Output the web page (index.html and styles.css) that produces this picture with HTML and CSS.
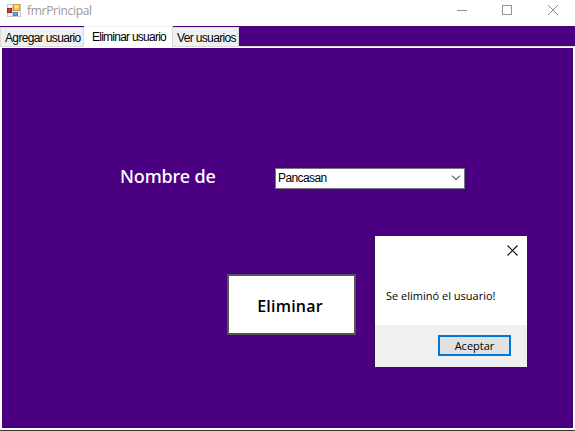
FILE: index.html
```html
<!DOCTYPE html>
<html lang="es">
<head>
<meta charset="utf-8">
<title>fmrPrincipal</title>
<link rel="stylesheet" href="styles.css">
</head>
<body>
<div class="window">
  <header class="titlebar">
    <svg class="app-icon" width="15" height="15" viewBox="0 0 15 15">
      <rect x=".5" y="1.500" width="13" height="12" fill="#f4f4f4" stroke="#c8c8c8"/>
      <path d="M5.500 1v12" stroke="#ccc"/>
      <rect x=".5" y="5.500" width="4" height="4" fill="#d8352b" stroke="#a91f17"/>
      <rect x="6.500" y="1.500" width="6" height="6" fill="#ffc83a" stroke="#d09a2c"/>
      <path d="M7 2h5v3H7z" fill="#ffe07a"/>
      <rect x="6.500" y="9.500" width="4" height="3" fill="#68a0ee" stroke="#4a80d4"/>
    </svg>
    <span class="title">fmrPrincipal</span>
    <svg class="controls" width="104" height="12" viewBox="0 0 104 12" fill="none" stroke="#929292">
      <path d="M0 7.500h10"/>
      <rect x="45.500" y="2.500" width="9" height="9"/>
      <path d="M91 2l10 10M101 2L91 10" stroke="none"/>
      <path d="M91 2l10 10M101 2L91 12"/>
    </svg>
  </header>
  <nav class="tabs">
    <span class="tab tab-add">Agregar usuario</span>
    <span class="tab tab-active">Eliminar usuario</span>
    <span class="tab tab-view">Ver usuarios</span>
  </nav>
  <main class="page">
    <div class="field">
      <label class="label">Nombre de</label>
      <div class="combo">
        <span>Pancasan</span>
        <svg width="10" height="6" viewBox="0 0 10 6" fill="none" stroke="#606060" stroke-width="1.200"><path d="M1 .7l4 4 4-4"/></svg>
      </div>
    </div>
    <button class="delete">Eliminar</button>
  </main>
  <section class="dialog">
    <div class="dialog-body">
      <svg class="dialog-close" width="11" height="11" viewBox="0 0 11 11" stroke="#111" stroke-width="1.100"><path d="M.5 .5l10 10M10.500 .5l-10 10"/></svg>
      <span class="message">Se eliminó el usuario!</span>
    </div>
    <div class="dialog-footer"><button class="accept">Aceptar</button></div>
  </section>
</div>
</body>
</html>
```
FILE: styles.css
```css
* { box-sizing: border-box; }
body { margin: 0; overflow: hidden; }
.window {
  position: relative;
  display: flex;
  flex-direction: column;
  width: 575px;
  height: 431px;
  background: #4b0082;
  border-bottom: 1px solid #39322f;
  font: 12px/14px "Liberation Sans", sans-serif;
  color: #000;
}
.titlebar {
  display: flex;
  align-items: flex-start;
  height: 26px;
  padding: 3px 14px 0 7px;
  background: #fff;
}
.title {
  margin: 1px 0 0 5px;
  font: 12px/14px "Open Sans", sans-serif;
  letter-spacing: -.3px;
  color: #999;
}
.controls { margin: 0 0 0 auto; }
.tabs {
  display: flex;
  align-items: flex-end;
  height: 21px;
  border-bottom: 1px solid #dcdcdc;
}
.tab {
  height: 19px;
  padding: 3px 0 0 4px;
  border: 1px solid #d9d9d9;
  border-bottom: 0;
  background: #f0f0f0;
  letter-spacing: -.65px;
  white-space: nowrap;
}
.tab-add { width: 84px; }
.tab-active {
  width: 89px;
  height: 21px;
  margin-bottom: -1px;
  padding: 3px 0 0 8px;
  border-top-color: #eee;
  border-left: 0;
  background: #fff;
  letter-spacing: -.75px;
}
.tab-view { width: 66px; border-left: 0; }
.page {
  flex: 1;
  border: solid #fff;
  border-width: 1px 2px 2px;
}
.field {
  display: flex;
  align-items: flex-start;
  margin: 120px 0 0 118px;
}
.label {
  width: 155px;
  margin-top: -4px;
  font: 500 18px/24px "Noto Sans", sans-serif;
  letter-spacing: -.15px;
  color: #fff;
}
.combo {
  display: flex;
  align-items: center;
  justify-content: space-between;
  width: 190px;
  height: 21px;
  padding: 0 3px 1px 2px;
  border: 1px solid #777;
  background: #fff;
  letter-spacing: -.6px;
}
.delete {
  display: block;
  width: 129px;
  height: 61px;
  margin: 85px 0 0 225px;
  padding: 2px 3px 0 0;
  border: 2px solid #555;
  background: #fff;
  font: 600 16px/20px "Open Sans", sans-serif;
  letter-spacing: .2px;
  color: #000;
}
.dialog {
  position: absolute;
  left: 374px;
  top: 235px;
  width: 154px;
  height: 133px;
  border: 1px solid #30154a;
  background: #fff;
  font: 11px/14px "Open Sans", sans-serif;
}
.dialog-body {
  display: flex;
  flex-direction: column;
  height: 89px;
  padding: 9px 9px 0 11px;
}
.dialog-close { align-self: flex-end; }
.message { margin-top: 33px; white-space: nowrap; }
.dialog-footer {
  height: 42px;
  padding: 10px 16px 0 0;
  background: #f0f0f0;
}
.accept {
  display: block;
  width: 73px;
  height: 21px;
  margin-left: auto;
  padding: 0;
  border: 2px solid #0078d7;
  background: #e1e1e1;
  font: 11px/14px "Open Sans", sans-serif;
  color: #000;
}
```
